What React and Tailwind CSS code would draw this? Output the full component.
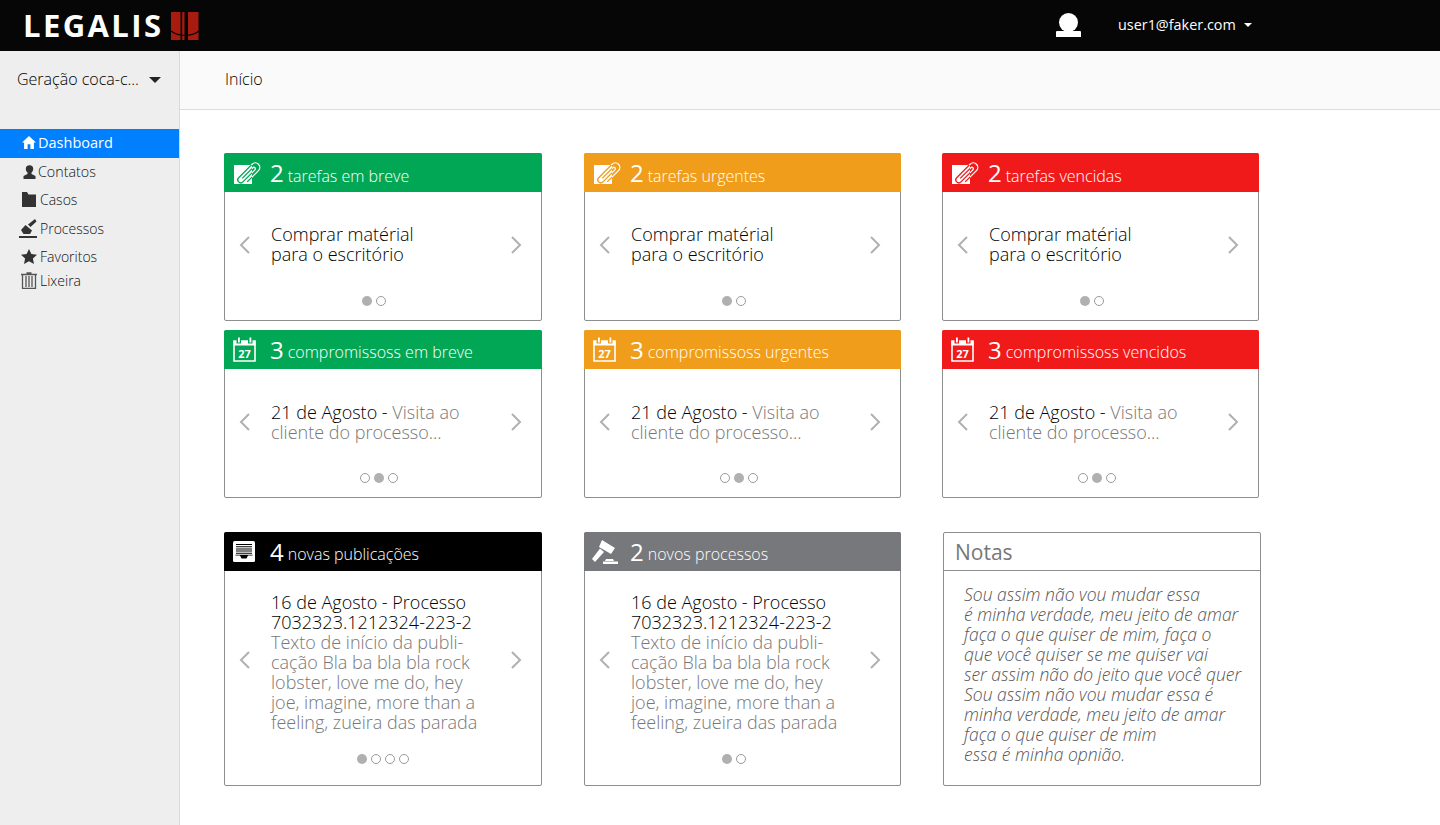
import React from 'react';

const font = { fontFamily: '"Open Sans", sans-serif' };

const clipPathD = 'M2 -1 H17 A1.500 1.500 0 0 1 17 2 H0 A3 3 0 0 1 0 -4 H19 A4.500 4.500 0 0 1 19 5 H3';

function ClipIcon({ color }) {
    return (
        <svg width="26" height="24" viewBox="0 0 26 24" className="shrink-0 overflow-visible ml-px">
            <defs>
                <clipPath id="clip-square"><rect x="0" y="4" width="18" height="19" /></clipPath>
            </defs>
            <rect x="0" y="4" width="18" height="19" fill="#fff" />
            <g transform="translate(7.500 19.500) rotate(-45)" fill="none" strokeWidth="1.300">
                <path d={clipPathD} stroke="#fff" />
            </g>
            <g clipPath="url(#clip-square)">
                <g transform="translate(7.500 19.500) rotate(-45)" fill="none" strokeWidth="1.300">
                    <path d={clipPathD} stroke={color} />
                </g>
            </g>
        </svg>
    );
}

function CalendarIcon({ color }) {
    return (
        <svg width="23" height="25" viewBox="0 0 23 25" className="shrink-0">
            <path d="M1 4h21v20H1z" fill="none" stroke="#fff" strokeWidth="1.600" />
            <path d="M0.500 4h22v4.500H.5z" fill="#fff" />
            <rect x="3.500" y="1" width="4.500" height="5.500" fill={color} />
            <rect x="15" y="1" width="4.500" height="5.500" fill={color} />
            <rect x="5" y="0.500" width="1.800" height="5" fill="#fff" />
            <rect x="16.500" y="0.500" width="1.800" height="5" fill="#fff" />
            <text x="11.500" y="20.500" textAnchor="middle" fontSize="11" fontWeight="700" fill="#fff" style={font}>27</text>
        </svg>
    );
}

function InboxIcon() {
    return (
        <svg width="22" height="24" viewBox="0 0 22 24" className="shrink-0">
            <rect x="0" y="1" width="22" height="21" rx="1.500" fill="#fff" />
            <path d="M3 4h16v1H3zM3 6.200h16v1H3zM3 8.400h16v1H3zM3 10.600h16v1H3zM3 12.800h16v1H3z" fill="#000" />
            <path d="M2.500 15.500h4.500l1.500 3h5l1.500-3h4.500v-.8h-17z" fill="#000" />
        </svg>
    );
}

function GavelIcon() {
    return (
        <svg width="26" height="26" viewBox="0 0 26 26" className="shrink-0 -ml-px">
            <path d="M10 1 23 9l-4 6L7 8z" fill="#fff" />
            <path d="M8 9.500 12 13 3 23 0 20z" fill="#fff" />
            <path d="M14 20h7l1 2H13zM11 22.500h15V25H11z" fill="#fff" />
        </svg>
    );
}

function Chevron({ dir }) {
    return (
        <svg width="11" height="18" viewBox="0 0 11 18">
            <path d={dir === 'left' ? 'M10 1 2 9l8 8' : 'M1 1l8 8-8 8'} fill="none" stroke="#b0b0b2" strokeWidth="2" />
        </svg>
    );
}

const tasks = ['Comprar matérial', 'para o escritório'];
const longText = ['Texto de início da publi-', 'cação Bla ba bla bla rock', 'lobster, love me do, hey', 'joe, imagine, more than a', 'feeling, zueira das parada'];

function Dots({ count, active, className }) {
    return (
        <div className={`flex gap-[4px] ${className}`}>
            {Array.from({ length: count }).map((_, i) => (
                <span
                    key={i}
                    className={i === active ? 'w-[10px] h-[10px] rounded-full bg-[#b0b0b2]' : 'w-[10px] h-[10px] rounded-full border border-[#9a9a9a] bg-white'}
                />
            ))}
        </div>
    );
}

function Card({ color, icon, count, label, labelPad = 'pt-[5px]', size = 'small', width = 'w-[318px]', dots, active, dotsPad, children }) {
    return (
        <div className={`flex flex-col rounded-[2px] border border-[#8e8e8e] bg-white ${width} ${size === 'small' ? 'h-[168px]' : 'h-[254px]'}`}>
            <div className={`flex items-center h-[39px] shrink-0 -mx-px -mt-px rounded-t-[2px] text-white ${color}`}>
                <div className="w-[46px] pl-[9px] flex items-center">{icon}</div>
                <span className="text-[24px] leading-none font-normal">{count}</span>
                <span className={`text-[16px] font-light ml-[4px] ${labelPad}`}>{label}</span>
            </div>
            <div className={`flex items-center ${size === 'small' ? 'h-[106px]' : 'h-[178px]'}`}>
                <div className="w-[46px] flex justify-start pl-[14px]">
                    <Chevron dir="left" />
                </div>
                <div className="flex-1 min-w-0 whitespace-nowrap text-[18px] leading-5 text-black font-light">{children}</div>
                <div className="w-[46px] flex justify-start pl-[16px]">
                    <Chevron dir="right" />
                </div>
            </div>
            <Dots count={dots} active={active} className={`${dotsPad} ${size === 'small' ? 'mt-[-2px]' : 'mt-[5px]'}`} />
        </div>
    );
}

function TaskCard({ color, hex, label, width }) {
    return (
        <Card color={color} icon={<ClipIcon color={hex} />} count="2" label={label} labelPad="pt-[7px]" width={width} dots={2} active={0} dotsPad="pl-[137px]">
            <div className="-mt-[2px]">
                {tasks.map(t => <div key={t}>{t}</div>)}
            </div>
        </Card>
    );
}

function EventCard({ color, hex, label, width }) {
    return (
        <Card color={color} icon={<CalendarIcon color={hex} />} count="3" label={label} width={width} dots={3} active={1} dotsPad="pl-[135px]">
            <div>21 de Agosto - <span className="text-[#777]">Visita ao</span></div>
            <div className="text-[#777]">cliente do processo...</div>
        </Card>
    );
}

function PubCard({ color, icon, count, label, width, dots, dotsPad }) {
    return (
        <Card color={color} icon={icon} count={count} label={label} size="big" width={width} dots={dots} active={0} dotsPad={dotsPad}>
            <div className="mt-[3px]">16 de Agosto - Processo</div>
            <div>7032323.1212324-223-2</div>
            {longText.map(t => <div key={t} className="text-[#777]">{t}</div>)}
        </Card>
    );
}

const notes = [
    'Sou assim não vou mudar essa',
    'é minha verdade, meu jeito de amar',
    'faça o que quiser de mim, faça o',
    'que você quiser se me quiser vai',
    'ser assim não do jeito que você quer',
    'Sou assim não vou mudar essa é',
    'minha verdade, meu jeito de amar',
    'faça o que quiser de mim',
    'essa é minha opnião.',
];

const menu = [
    { label: 'Dashboard', row: 'h-[29px] pb-[2px] bg-[#0080ff] text-white mb-[2px] text-[14.500px]', iconBox: 'ml-[22px] w-[16px]', icon: <svg width="14" height="13" viewBox="0 0 15 14"><path d="M7.500 0 15 7h-2.200v7H9V9H6v5H2.200V7H0z" fill="#fff" /></svg> },
    { label: 'Contatos', row: 'h-[26px] pb-[2px] text-[#111] text-[14.300px] font-light', iconBox: 'ml-[23px] w-[15px]', icon: <svg width="13" height="14" viewBox="0 0 13 14"><circle cx="6.500" cy="4" r="3.700" fill="#333" /><path d="M4.500 7h4v2l4 2v3H.5v-3l4-2z" fill="#333" /></svg> },
    { label: 'Casos', row: 'h-[28px] pb-[2px] text-[#111] text-[14px] font-light', iconBox: 'ml-[22px] w-[18px]', icon: <svg width="14" height="15" viewBox="0 0 14 15"><path d="M0 0h5l1.500 2.500H14V15H0z" fill="#333" /></svg> },
    { label: 'Processos', row: 'h-[29px] text-[#111] text-[14px] font-light', iconBox: 'ml-[19px] w-[21px]', icon: <svg width="18" height="19" viewBox="0 0 18 19"><path d="M0 17h18v2H0zM2 11l4.500-5 6.500 5.500L11 15H4.500zM9 5.500 16 0l1.500 2.500-6 5.500z" fill="#333" /></svg> },
    { label: 'Favoritos', row: 'h-[24px] pt-[2px] text-[#111] text-[14px] font-light', iconBox: 'ml-[21px] w-[19px]', icon: <svg width="16" height="15" viewBox="0 0 16 15"><path d="M8 0l2.400 5 5.600.7-4.100 3.800 1.100 5.500L8 12.300 3 15l1.100-5.500L0 5.700 5.600 5z" fill="#333" /></svg> },
    { label: 'Lixeira', row: 'h-[26px] text-[#111] text-[14px] font-light', iconBox: 'ml-[21px] w-[19px]', icon: <svg width="16" height="17" viewBox="0 0 16 17"><path d="M0 2.500h16M1.500 2.500V16.500h13V2.500M5 4v11M8 4v11M11 4v11M5.500 1h5" fill="none" stroke="#555" strokeWidth="1.300" /></svg> },
];

export default function App() {
    return (
        <div className="h-[825px] flex flex-col bg-white overflow-hidden" style={font}>
            {/* Top bar */}
            <header className="h-[51px] shrink-0 bg-[#060606] flex items-center text-white">
                <span className="ml-[23px] w-[148px] text-[31px] leading-none font-bold tracking-[2.400px]">LEGALIS</span>
                <svg width="28" height="28" viewBox="0 0 28 28">
                    <path d="M0 0h9.500v28H0zM11.200 0h2.300v28h-2.300zM17 0h10.500v28H17z" fill="#a81c10" />
                    <path d="M0 19c8 6 20 6 28 0" fill="none" stroke="#060606" strokeWidth="1.200" />
                </svg>
                <div className="ml-[857px] w-[25px] h-[25px] flex flex-col items-center">
                    <span className="w-[19px] h-[19px] rounded-full bg-white" />
                    <span className="w-[25px] h-[6px] -mt-px bg-white rounded-t-[1px]" />
                </div>
                <span className="ml-[37px] text-[14.400px] -mt-[2px]">user1@faker.com</span>
                <span className="ml-[8px] -mt-px border-x-[4.500px] border-x-transparent border-t-[4px] border-t-white" />
            </header>

            <div className="flex flex-1 min-h-0">
                {/* Sidebar */}
                <aside className="w-[180px] shrink-0 bg-[#eeeeee] border-r border-[#d9d9d9]">
                    <div className="flex items-center h-[78px] pl-[17px] pb-[22px]">
                        <span className="text-[16px] font-light text-black">Geração coca-c...</span>
                        <span className="ml-[10px] mt-[2px] border-x-[6px] border-x-transparent border-t-[6px] border-t-[#222]" />
                    </div>
                    <nav>
                        {menu.map(item => (
                            <div key={item.label} className={`flex items-center ${item.row}`}>
                                <div className={`flex items-center ${item.iconBox}`}>{item.icon}</div>
                                <span>{item.label}</span>
                            </div>
                        ))}
                    </nav>
                </aside>

                <div className="flex-1 min-w-0">
                    <div className="h-[59px] pb-[2px] bg-[#fafafa] border-b border-[#dcdcdc] flex items-center pl-[45px] text-[16px] font-light text-black">Início</div>

                    <main className="pt-[43px] pl-[44px]">
                        <div className="grid grid-cols-[360px_358px_318px] gap-y-[9px]">
                            <TaskCard color="bg-[#02a755]" hex="#02a755" label="tarefas em breve" />
                            <TaskCard color="bg-[#ef9d1a]" hex="#ef9d1a" label="tarefas urgentes" width="w-[317px]" />
                            <TaskCard color="bg-[#f01a1a]" hex="#f01a1a" label="tarefas vencidas" width="w-[317px]" />
                            <EventCard color="bg-[#02a755]" hex="#02a755" label="compromissoss em breve" />
                            <EventCard color="bg-[#ef9d1a]" hex="#ef9d1a" label="compromissoss urgentes" width="w-[317px]" />
                            <EventCard color="bg-[#f01a1a]" hex="#f01a1a" label="compromissoss vencidos" width="w-[317px]" />
                        </div>
                        <div className="grid grid-cols-[360px_359px_318px] mt-[34px]">
                            <PubCard color="bg-black" icon={<InboxIcon />} count="4" label="novas publicações" dots={4} dotsPad="pl-[132px]" />
                            <PubCard color="bg-[#77787b]" icon={<GavelIcon />} count="2" label="novos processos" width="w-[317px]" dots={2} dotsPad="pl-[137px]" />
                            <div className="h-[254px] w-[318px] rounded-[2px] border border-[#8e8e8e]">
                                <div className="h-[38px] pl-[11px] pt-[2px] flex items-center text-[21px] text-[#777] border-b border-[#8e8e8e]">Notas</div>
                                <div className="pl-[20px] pt-[13px] text-[17.500px] leading-5 italic font-light text-[#555]">
                                    {notes.map(n => <div key={n} className="whitespace-nowrap">{n}</div>)}
                                </div>
                            </div>
                        </div>
                    </main>
                </div>
            </div>
        </div>
    );
}
